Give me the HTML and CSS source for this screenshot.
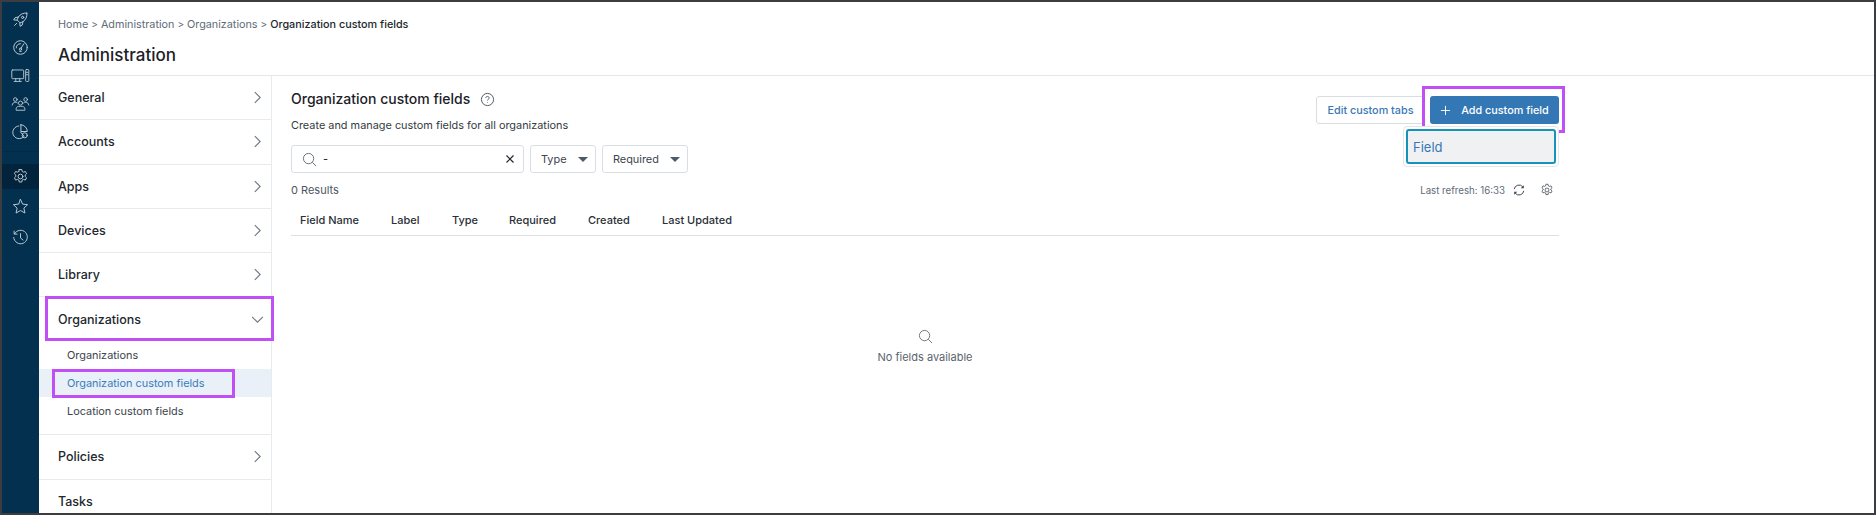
FILE: index.html
```html
<!DOCTYPE html>
<html lang="en">
<head>
    <meta charset="UTF-8">
    <meta name="viewport" content="width=device-width, initial-scale=1.0">
    <title>Organization custom fields</title>
    <link rel="stylesheet" href="styles.css">
</head>
<body>
<div class="frame">
    <nav class="rail">
        <div class="rail-item">
            <svg class="rail-icon" viewBox="0 0 20 20"><path d="M17.500 2.500c-4-.4-7.600 1-10 4.500l-1.500 3.500 3.500 3.500 3.500-1.500c3.500-2.400 4.900-6 4.500-10zM7.500 7L3.500 8l-1.500 2.500 4 .3M13 12.500l-1 4-2.500 1.500-.3-4M5.500 14.500l-2.500 2.500"/><circle cx="12.500" cy="7.500" r="1.300"/></svg>
        </div>
        <div class="rail-item">
            <svg class="rail-icon" viewBox="0 0 20 20"><circle cx="10" cy="10" r="8"/><path d="M14 5.500l-3.500 5.500M9 14.500h2M5 10.500c0-3 2-5 5-5"/><circle cx="10" cy="12" r="1.300"/></svg>
        </div>
        <div class="rail-item">
            <svg class="rail-icon wide" viewBox="0 0 24 20"><rect x="1" y="3" width="15" height="11" rx="1"/><path d="M6 14v3M11 14v3M4 17.500h9"/><rect x="18.500" y="2.500" width="4" height="15" rx="1"/><path d="M19.500 6h2M19.500 9h2"/></svg>
        </div>
        <div class="rail-item">
            <svg class="rail-icon wide" viewBox="0 0 24 20"><circle cx="5.500" cy="5" r="2.300"/><circle cx="18.500" cy="5" r="2.300"/><circle cx="12" cy="9.500" r="2.600"/><path d="M1.500 12c.3-2.500 2-3.500 4-3.500 1 0 1.800.2 2.500.7M22.500 12c-.3-2.500-2-3.500-4-3.500-1 0-1.800.2-2.500.7M6.500 18v-1.500c0-2 2-3 5.500-3s5.500 1 5.500 3V18z"/></svg>
        </div>
        <div class="rail-item">
            <svg class="rail-icon" viewBox="0 0 20 20"><path d="M8 3.500a7.500 7.500 0 1 0 5.500 13"/><path d="M10.500 2v8h7.500a8 8 0 0 0-7.500-8zM10 10.500l4 5"/><circle cx="15" cy="14.500" r="3"/></svg>
        </div>
        <div class="rail-divider"></div>
        <div class="rail-item active">
            <svg class="rail-icon" viewBox="0 0 20 20"><use href="#gear"/></svg>
        </div>
        <div class="rail-item tall">
            <svg class="rail-icon" viewBox="0 0 20 20"><path d="M10 1.800l2.500 5.400 5.800.7-4.300 4 1.200 5.800-5.200-3-5.200 3 1.200-5.800-4.300-4 5.800-.7z"/></svg>
        </div>
        <div class="rail-item tall">
            <svg class="rail-icon" viewBox="0 0 20 20"><path d="M3 5.500A8 8 0 1 1 2 10M2.500 2.500v3.500H6M10 5.500V10.500l3 2.500"/></svg>
        </div>
    </nav>

    <div class="page">
        <header class="page-head">
            <div class="crumbs">
                <span>Home</span><i>&gt;</i><span>Administration</span><i>&gt;</i><span>Organizations</span><i>&gt;</i><b>Organization custom fields</b>
            </div>
            <h1>Administration</h1>
        </header>

        <div class="page-body">
            <aside class="side">
                <div class="side-row">General<svg class="chev" viewBox="0 0 10 14"><path d="M2 1l6 6-6 6"/></svg></div>
                <div class="side-row">Accounts<svg class="chev" viewBox="0 0 10 14"><path d="M2 1l6 6-6 6"/></svg></div>
                <div class="side-row">Apps<svg class="chev" viewBox="0 0 10 14"><path d="M2 1l6 6-6 6"/></svg></div>
                <div class="side-row">Devices<svg class="chev" viewBox="0 0 10 14"><path d="M2 1l6 6-6 6"/></svg></div>
                <div class="side-row">Library<svg class="chev" viewBox="0 0 10 14"><path d="M2 1l6 6-6 6"/></svg></div>
                <div class="side-row open">Organizations<svg class="chev down" viewBox="0 0 14 10"><path d="M1 2l6 6 6-6"/></svg><span class="mark mark-org"></span></div>
                <div class="side-sub">
                    <div class="sub-row">Organizations</div>
                    <div class="sub-row current">Organization custom fields<span class="mark mark-sub"></span></div>
                    <div class="sub-row">Location custom fields</div>
                </div>
                <div class="side-row">Policies<svg class="chev" viewBox="0 0 10 14"><path d="M2 1l6 6-6 6"/></svg></div>
                <div class="side-row">Tasks</div>
            </aside>

            <main class="content">
                <div class="title-bar">
                    <div>
                        <h2>Organization custom fields
                            <svg class="help" viewBox="0 0 16 16"><circle cx="8" cy="8" r="6.500"/><path d="M6.200 6.400c0-1 .8-1.700 1.800-1.700s1.800.7 1.800 1.600c0 1.300-1.800 1.400-1.800 2.700"/><path d="M8 11v.6"/></svg>
                        </h2>
                        <p class="lead">Create and manage custom fields for all organizations</p>
                    </div>
                    <div class="actions">
                        <button class="btn btn-light">Edit custom tabs</button>
                        <button class="btn btn-main">
                            <svg class="plus" viewBox="0 0 12 12"><path d="M6 1v10M1 6h10"/></svg>Add custom field
                            <span class="mark mark-add"></span>
                        </button>
                        <div class="menu"><div class="menu-item">Field</div></div>
                    </div>
                </div>

                <div class="filters">
                    <div class="search">
                        <svg class="search-icon" viewBox="0 0 16 16"><circle cx="7" cy="7" r="5.500"/><path d="M11 11l4 4"/></svg>
                        <span class="search-value">-</span>
                        <svg class="clear" viewBox="0 0 10 10"><path d="M1.500 1.500l7 7M8.500 1.500l-7 7"/></svg>
                    </div>
                    <div class="select type">Type<span class="caret"></span></div>
                    <div class="select required">Required<span class="caret"></span></div>
                </div>

                <div class="meta">
                    <span>0 Results</span>
                    <div class="meta-right">
                        <span class="refresh">Last refresh: 16:33</span>
                        <svg class="tool" viewBox="0 0 16 16"><path d="M2.500 7a5.600 5.600 0 0 1 9.800-2.700M13.500 9a5.600 5.600 0 0 1-9.800 2.700"/><path class="solid" d="M13.500 2.500v3.500H10zM2.500 13.500V10H6z"/></svg>
                        <svg class="tool" viewBox="0 0 20 20"><use href="#gear"/></svg>
                    </div>
                </div>

                <div class="table-head">
                    <span class="col-name">Field Name</span>
                    <span class="col-label">Label</span>
                    <span class="col-type">Type</span>
                    <span class="col-req">Required</span>
                    <span class="col-created">Created</span>
                    <span>Last Updated</span>
                </div>

                <div class="empty">
                    <svg class="empty-icon" viewBox="0 0 16 16"><circle cx="7" cy="7" r="5.500"/><path d="M11 11l4 4"/></svg>
                    <span>No fields available</span>
                </div>
            </main>
        </div>
    </div>
</div>

<svg class="defs" width="0" height="0">
    <symbol id="gear" viewBox="0 0 20 20">
        <path d="M8.500 1.800h3l.5 2.300 1.500.8 2.200-.8 1.500 2.600-1.700 1.600v1.700l1.700 1.600-1.500 2.600-2.200-.8-1.500.8-.5 2.300h-3l-.5-2.300-1.500-.8-2.200.8-1.500-2.600 1.700-1.600V8.300L2.800 6.700l1.500-2.600 2.200.8 1.500-.8z"/>
        <circle cx="10" cy="10" r="2.800"/>
    </symbol>
</svg>
</body>
</html>
```

FILE: styles.css
```css
* {
    box-sizing: border-box;
}
html, body {
    margin: 0;
    height: 100%;
    overflow: hidden;
}
body {
    font-family: Inter, "Liberation Sans", sans-serif;
    font-size: 11px;
    color: #22272d;
    background-color: #fff;
}
.defs {
    position: absolute;
}
.frame {
    display: flex;
    height: 100vh;
    border: 2px solid #3b3d40;
    overflow: hidden;
}

/* left rail */
.rail {
    width: 37px;
    flex-shrink: 0;
    padding-top: 3px;
    display: flex;
    flex-direction: column;
    background-color: #03304e;
}
.rail-item {
    height: 28px;
    display: flex;
    align-items: center;
    justify-content: center;
}
.rail-item.tall {
    height: 31px;
}
.rail-item.active {
    height: 25px;
    margin-bottom: 2px;
    background-color: #01243c;
}
.rail-divider {
    height: 1px;
    margin: 6px 0 12px;
    background-color: #022a45;
}
.rail-icon {
    width: 17px;
    height: 17px;
    fill: none;
    stroke: #c4d0d9;
    stroke-width: 1.100;
    stroke-linejoin: round;
    stroke-linecap: round;
}
.rail-icon.wide {
    width: 19px;
}

/* header */
.page {
    flex: 1;
    min-width: 0;
    display: flex;
    flex-direction: column;
}
.page-head {
    height: 74px;
    flex-shrink: 0;
    padding: 15px 19px 0;
    border-bottom: 1px solid #e4e7eb;
}
.crumbs {
    display: flex;
    align-items: center;
    gap: 3px;
    height: 14px;
    font-size: 10.800px;
    color: #5f6b78;
}
.crumbs i {
    font-style: normal;
    font-size: 10px;
}
.crumbs b {
    font-weight: 500;
    color: #22272d;
}
.page-head h1 {
    margin: 13px 0 0;
    font-size: 17px;
    line-height: 22px;
    font-weight: 500;
    color: #1c2127;
}
.page-body {
    flex: 1;
    min-height: 0;
    display: flex;
}

/* sidebar */
.side {
    width: 233px;
    flex-shrink: 0;
    border-right: 1px solid #e8ebee;
}
.side-row {
    position: relative;
    height: 44.300px;
    padding: 0 9px 0 19px;
    display: flex;
    align-items: center;
    justify-content: space-between;
    font-size: 12.500px;
    font-weight: 500;
    border-bottom: 1px solid #e8ebee;
}
.side-row.open {
    height: 43.300px;
    border-bottom: none;
}
.chev {
    width: 9px;
    height: 13px;
    fill: none;
    stroke: #6b7784;
    stroke-width: 1.200;
}
.chev.down {
    width: 13px;
    height: 9px;
    margin-right: -2px;
}
.side-sub {
    padding: 0 0 9.500px;
    border-bottom: 1px solid #e8ebee;
}
.sub-row {
    position: relative;
    height: 28px;
    padding-left: 28px;
    display: flex;
    align-items: center;
    font-size: 10.900px;
    color: #3c444d;
}
.sub-row.current {
    color: #3a7cbd;
    background-color: #e9f0f7;
}

/* purple call-outs drawn over the page */
.mark {
    position: absolute;
    border: 3px solid #c04ff5;
    pointer-events: none;
}
.mark-org {
    left: 6px;
    right: -3px;
    top: -1px;
    bottom: 0;
}
.mark-sub {
    left: 13px;
    width: 183px;
    top: 0;
    bottom: -1px;
}
.mark-add {
    left: -8px;
    right: -6px;
    top: -10px;
    bottom: -9px;
}

/* content */
.content {
    width: 1287px;
    padding: 0 0 0 19px;
    display: flex;
    flex-direction: column;
    min-width: 0;
}
.title-bar {
    height: 69px;
    padding-top: 13px;
    display: flex;
    justify-content: space-between;
}
.content h2 {
    margin: 0;
    display: flex;
    align-items: center;
    gap: 10px;
    font-size: 14px;
    line-height: 20px;
    font-weight: 500;
    color: #1c2127;
}
.help {
    width: 15px;
    height: 15px;
    fill: none;
    stroke: #4a545e;
    stroke-width: 1;
}
.lead {
    margin: 8px 0 0;
    font-size: 10.900px;
    line-height: 16px;
    color: #343b43;
}
.actions {
    position: relative;
    display: flex;
    align-items: flex-start;
    gap: 5px;
    padding-top: 7px;
}
.btn {
    position: relative;
    height: 28px;
    border-radius: 3px;
    font-family: inherit;
    font-size: 10.800px;
    font-weight: 500;
    display: flex;
    align-items: center;
}
.btn-light {
    width: 109px;
    justify-content: center;
    color: #3a78b5;
    background-color: #fff;
    border: 1px solid #d9dee3;
}
.btn-main {
    width: 129px;
    justify-content: center;
    gap: 10px;
    color: #fff;
    background-color: #3377b4;
    border: none;
}
.plus {
    width: 11px;
    height: 11px;
    fill: none;
    stroke: #fff;
    stroke-width: 1;
}
.menu {
    position: absolute;
    right: 0;
    top: 37px;
    width: 156px;
    height: 41px;
    padding: 2px;
    background-color: #fff;
    border: 1px solid #e2e5e9;
    border-radius: 4px;
}
.menu-item {
    height: 100%;
    padding-left: 5px;
    display: flex;
    align-items: center;
    font-size: 13px;
    color: #3a78b5;
    background-color: #eff1f3;
    border: 2px solid #1693b8;
    border-radius: 3px;
}

/* filters */
.filters {
    display: flex;
    gap: 6px;
}
.search, .select {
    height: 28px;
    display: flex;
    align-items: center;
    background-color: #fff;
    border: 1px solid #d9dee3;
    border-radius: 3px;
}
.search {
    width: 233px;
    padding: 0 8px 0 10px;
}
.search-icon {
    width: 15px;
    height: 15px;
    fill: none;
    stroke: #5f6b78;
    stroke-width: 1;
}
.search-value {
    flex: 1;
    margin-left: 6px;
}
.clear {
    width: 10px;
    height: 10px;
    fill: none;
    stroke: #22272d;
    stroke-width: 1.200;
}
.select {
    padding-left: 10px;
    padding-right: 7px;
    justify-content: space-between;
    font-size: 10.900px;
    color: #3c444d;
}
.select.type {
    width: 66px;
}
.select.required {
    width: 86px;
}
.caret {
    width: 0;
    height: 0;
    border-left: 5px solid transparent;
    border-right: 5px solid transparent;
    border-top: 5px solid #4f5a66;
}
.meta {
    height: 22px;
    margin-top: 6px;
    display: flex;
    align-items: center;
    justify-content: space-between;
    font-size: 11px;
    color: #4c5661;
}
.meta-right {
    display: flex;
    align-items: center;
}
.refresh {
    font-size: 9.700px;
    color: #5f6b78;
}
.tool {
    width: 14px;
    height: 14px;
    margin-left: 7px;
    fill: none;
    stroke: #3c444d;
    stroke-width: 1.100;
}
.tool:last-child {
    margin: 0 5px 0 14px;
}
.solid {
    fill: #3c444d;
    stroke: none;
}
.table-head {
    height: 32px;
    margin-top: 3px;
    padding: 0 0 0 9px;
    display: flex;
    align-items: center;
    font-size: 11px;
    font-weight: 500;
    color: #2a3037;
    border-bottom: 1px solid #dcdfe3;
}
.col-name { width: 91px; }
.col-label { width: 61px; }
.col-type { width: 57px; }
.col-req { width: 79px; }
.col-created { width: 74px; }

.empty {
    margin-top: 93px;
    display: flex;
    flex-direction: column;
    align-items: center;
    gap: 6px;
    font-size: 11px;
    color: #59636e;
}
.empty-icon {
    width: 15px;
    height: 15px;
    fill: none;
    stroke: #59636e;
    stroke-width: .9;
}
```
